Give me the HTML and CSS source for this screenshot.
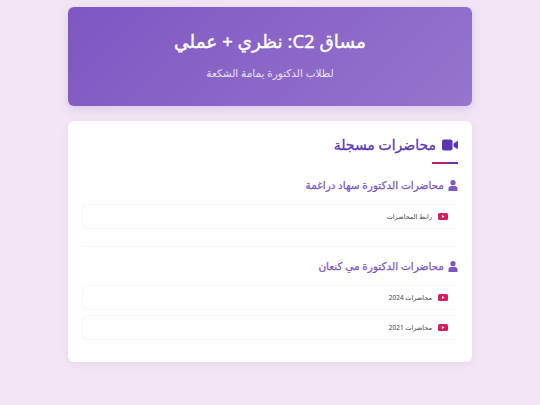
FILE: index.html
```html
<!DOCTYPE html>
<html lang="ar" dir="rtl">
<head>
<meta charset="utf-8">
<title>مساق C2</title>
<link rel="stylesheet" href="styles.css">
</head>
<body>
<main class="page">
  <header class="hero">
    <h1 class="hero-title">مساق C2: نظري + عملي</h1>
    <p class="hero-sub">لطلاب الدكتورة يمامة الشكعة</p>
  </header>
  <section class="card">
    <div class="card-head">
      <h2 class="card-title">
        <svg class="icon-video" viewBox="0 0 16 12"><rect x="0" y="0.5" width="10.500" height="11" rx="2"/><path d="M11.500 4.600 15 2.200c.4-.3 1-.1 1 .5v6.600c0 .6-.6.8-1 .5l-3.500-2.400z"/></svg>
        <span>محاضرات مسجلة</span>
      </h2>
      <div class="rule"></div>
    </div>

    <h3 class="sub-title">
      <svg class="icon-user" viewBox="0 0 10 11"><circle cx="5" cy="2.700" r="2.600"/><path d="M0.500 11V8.500C.5 7 1.700 6 3 6h4c1.300 0 2.500 1 2.500 2.500V11z"/></svg>
      <span>محاضرات الدكتورة سهاد دراغمة</span>
    </h3>
    <a class="item">
      <svg class="icon-yt" viewBox="0 0 10 7"><rect width="10" height="7" rx="1.600"/><path class="play" d="M4 2v3l2.500-1.500z"/></svg>
      <span>رابط المحاضرات</span>
    </a>

    <hr class="divider">

    <h3 class="sub-title">
      <svg class="icon-user" viewBox="0 0 10 11"><circle cx="5" cy="2.700" r="2.600"/><path d="M0.500 11V8.500C.5 7 1.700 6 3 6h4c1.300 0 2.500 1 2.500 2.500V11z"/></svg>
      <span>محاضرات الدكتورة مي كنعان</span>
    </h3>
    <a class="item">
      <svg class="icon-yt" viewBox="0 0 10 7"><rect width="10" height="7" rx="1.600"/><path class="play" d="M4 2v3l2.500-1.500z"/></svg>
      <span>محاضرات 2024</span>
    </a>
    <a class="item">
      <svg class="icon-yt" viewBox="0 0 10 7"><rect width="10" height="7" rx="1.600"/><path class="play" d="M4 2v3l2.500-1.500z"/></svg>
      <span>محاضرات 2021</span>
    </a>
  </section>
</main>
</body>
</html>
```
FILE: styles.css
```css
* { box-sizing: border-box; }
html, body { margin: 0; padding: 0; }
body {
  height: 405px;
  overflow: hidden;
  background: #f3e5f5;
  font-family: "Noto Sans", "DejaVu Sans", sans-serif;
  color: #424242;
}
.page {
  width: 404px;
  margin: 0 auto;
  padding-top: 7px;
  display: flex;
  flex-direction: column;
  gap: 15px;
}
.hero {
  height: 99px;
  border-radius: 6px;
  background: linear-gradient(135deg, #7e57c2, #9575cd);
  box-shadow: 0 3px 10px rgba(126, 87, 194, 0.2);
  color: #fff;
  text-align: center;
  padding-top: 20px;
}
.hero-title {
  margin: 0;
  font-size: 18.5px;
  line-height: 28px;
  font-weight: 400;
  -webkit-text-stroke: 0.4px #fff;
}
.hero-sub {
  margin: 10px 0 0;
  font-size: 10.5px;
  line-height: 16px;
  opacity: .8;
}
.card {
  height: 241px;
  background: #fff;
  border-radius: 6px;
  box-shadow: 0 2px 8px rgba(0, 0, 0, 0.06);
  padding: 14px;
}
.card-title {
  margin: 0;
  display: flex;
  align-items: center;
  gap: 6px;
  font-size: 14px;
  line-height: 20px;
  font-weight: 400;
  -webkit-text-stroke: 0.3px #5e35b1;
  color: #5e35b1;
}
.icon-video { width: 16px; height: 12px; fill: #5e35b1; flex: none; }
.rule {
  width: 26px;
  height: 2px;
  margin-top: 7px;
  background: linear-gradient(90deg, #d81b60, #5e35b1);
}
.sub-title {
  margin: 12px 0 0;
  display: flex;
  align-items: center;
  gap: 4px;
  font-size: 10.5px;
  line-height: 18px;
  font-weight: 400;
  -webkit-text-stroke: 0.25px #7e57c2;
  color: #7e57c2;
}
.icon-user { width: 10px; height: 11px; fill: #7e57c2; flex: none; }
.item {
  display: flex;
  align-items: center;
  gap: 6px;
  height: 25px;
  margin-top: 10px;
  padding-right: 10px;
  border: 1px solid #f5f5f5;
  border-right: 0;
  border-radius: 6px 0 0 6px;
  font-size: 6.5px;
  line-height: 21px;
  color: #424242;
}
.item + .item { margin-top: 5px; }
.icon-yt { width: 10px; height: 7px; fill: #d81b60; flex: none; }
.icon-yt .play { fill: #fff; }
.divider {
  height: 1px;
  margin: 17px 0 0;
  border: 0;
  background: #f5f5f5;
}
.divider + .sub-title { margin-top: 10px; }
```
